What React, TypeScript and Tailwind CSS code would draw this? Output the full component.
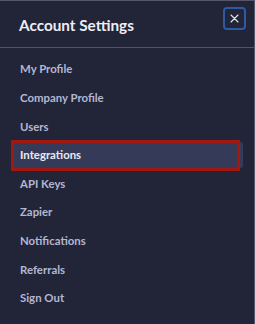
const items = [
  "My Profile",
  "Company Profile",
  "Users",
  "Integrations",
  "API Keys",
  "Zapier",
  "Notifications",
  "Referrals",
  "Sign Out",
];

const App = () => {
  return (
    <div
      className="h-[324px] w-[255px] overflow-hidden border-r border-t border-[#55566a] bg-[#222438]"
      style={{ fontFamily: "Lato, 'Open Sans', sans-serif" }}
    >
      <div className="flex h-[47px] justify-between border-b border-[#4b4f8c] pl-[19px] pr-[8px]">
        <h2 className="mt-[14px] text-[15.3px] font-bold leading-[20px] text-[#eceef5]">Account Settings</h2>
        <button className="mt-[6px] flex h-[23px] w-[23px] items-center justify-center rounded-[4px] border-2 border-[#2e5aa3]">
          <svg width="9" height="9" viewBox="0 0 9 9" stroke="#e6e8f0" strokeWidth="1.1" strokeLinecap="round">
            <path d="M1 1l7 7M8 1l-7 7" />
          </svg>
        </button>
      </div>

      <ul className="flex flex-col gap-[2.6px] pt-[8px]">
        {items.map((item) => {
          const active = item === "Integrations";
          return (
            <li
              key={item}
              className={
                active
                  ? "relative mx-[11px] flex h-[26px] items-center rounded-[3px] bg-[#363a59] pl-[9px] text-[11.4px] font-bold text-[#e9ebf3]"
                  : "mx-[11px] flex h-[26px] items-center pl-[9px] text-[11.4px] font-bold text-[#b3b7d2]"
              }
            >
              {item}
              {active && (
                <span className="absolute -bottom-[3px] -top-[2px] left-0 right-[3px] border-[3px] border-[#a3180e]" />
              )}
            </li>
          );
        })}
      </ul>
    </div>
  );
};

export default App;
